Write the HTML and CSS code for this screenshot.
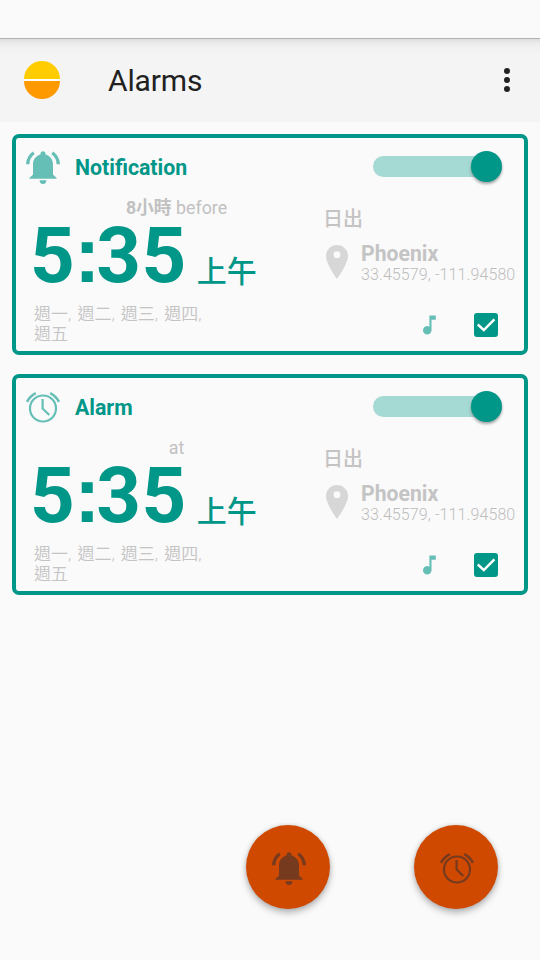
FILE: index.html
```html
<!DOCTYPE html>
<html lang="zh-Hant">
<head>
<meta charset="utf-8">
<title>Alarms</title>
<link rel="stylesheet" href="styles.css">
</head>
<body>
<svg class="symbols" aria-hidden="true">
  <symbol id="bell" viewBox="0 0 34 34">
    <path fill="currentColor" d="M17 .2a2.5 2.5 0 0 1 2.5 2.5v.8C24.2 4.800 27 8.500 27 13.200V23.500L30.600 27v.8H3.400V27L7 23.500V13.200C7 8.500 9.800 4.800 14.500 3.500V2.700A2.500 2.500 0 0 1 17 .2zM13.600 29.300h6.800a3.400 3.700 0 0 1-6.800 0z"/>
    <path fill="none" stroke="currentColor" stroke-width="3.300" d="M1.700 13.300C1.900 8.600 4 4.500 7.700 1.700M32.300 13.300C32.100 8.600 30 4.500 26.300 1.700"/>
  </symbol>
  <symbol id="clock" viewBox="0 0 34 34">
    <g fill="none" stroke="currentColor" stroke-width="2.200">
      <circle cx="17" cy="17.500" r="13"/>
      <path stroke-linejoin="round" d="M16.600 8v9.500l6.700 6.500"/>
      <path stroke-width="2.500" d="M1 10.800C3 7 5.900 4.100 9.800 2.100M33 10.800C31 7 28.100 4.100 24.200 2.100"/>
    </g>
  </symbol>
  <symbol id="pin" viewBox="0 0 22 34">
    <path fill="currentColor" fill-rule="evenodd" d="M11 0A11 11 0 0 0 0 11C0 19 11 34 11 34S22 19 22 11A11 11 0 0 0 11 0zm0 6.300a3.400 3.400 0 1 1 0 6.800a3.400 3.400 0 0 1 0-6.800z"/>
  </symbol>
  <symbol id="note" viewBox="6 3 12.200 18">
    <path fill="currentColor" d="M12 3v10.550A4 4 0 1 0 14 17V7h4V3z"/>
  </symbol>
  <symbol id="check" viewBox="0 0 24 24">
    <rect width="24" height="24" rx="3" fill="#009688"/>
    <path fill="none" stroke="#fff" stroke-width="2.500" d="M3.800 11.500l6 5.600L20.400 6.300"/>
  </symbol>
</svg>
<div class="status"></div>
<header class="bar">
  <svg class="logo" viewBox="0 0 36 38"><path fill="#fc0" d="M0 18a18 18 0 0 1 36 0z"/><path fill="#fff" d="M0 18h36v2H0z"/><path fill="#f90" d="M0 20a18 18 0 0 0 36 0z"/></svg>
  <h1>Alarms</h1>
  <svg class="more" viewBox="0 0 6 24"><circle cx="3" cy="3" r="3"/><circle cx="3" cy="12" r="3"/><circle cx="3" cy="21" r="3"/></svg>
</header>
<main>
  <section class="card">
    <div class="head">
      <svg class="type"><use href="#bell"/></svg>
      <h2>Notification</h2>
      <div class="switch"><span class="thumb"></span></div>
    </div>
    <div class="body">
      <div class="left">
        <div class="offset"><b>8小時</b> before</div>
        <div class="time">5<span class="colon">:</span>35<span class="ampm">上午</span></div>
        <div class="days">週一, 週二, 週三, 週四,<br>週五</div>
      </div>
      <div class="right">
        <div class="event">日出</div>
        <div class="place">
          <svg class="pin"><use href="#pin"/></svg>
          <div><div class="city">Phoenix</div><div class="coords">33.45579, -111.94580</div></div>
        </div>
        <div class="actions"><svg class="note"><use href="#note"/></svg><svg class="check"><use href="#check"/></svg></div>
      </div>
    </div>
  </section>
  <section class="card">
    <div class="head">
      <svg class="type"><use href="#clock"/></svg>
      <h2>Alarm</h2>
      <div class="switch"><span class="thumb"></span></div>
    </div>
    <div class="body">
      <div class="left">
        <div class="offset">at</div>
        <div class="time">5<span class="colon">:</span>35<span class="ampm">上午</span></div>
        <div class="days">週一, 週二, 週三, 週四,<br>週五</div>
      </div>
      <div class="right">
        <div class="event">日出</div>
        <div class="place">
          <svg class="pin"><use href="#pin"/></svg>
          <div><div class="city">Phoenix</div><div class="coords">33.45579, -111.94580</div></div>
        </div>
        <div class="actions"><svg class="note"><use href="#note"/></svg><svg class="check"><use href="#check"/></svg></div>
      </div>
    </div>
  </section>
</main>
<footer class="fabs">
  <div class="fab"><svg><use href="#bell"/></svg></div>
  <div class="fab"><svg><use href="#clock"/></svg></div>
</footer>
</body>
</html>
```
FILE: styles.css
```css
* { box-sizing: border-box; }
body {
  margin: 0;
  width: 540px;
  height: 960px;
  display: flex;
  flex-direction: column;
  overflow: hidden;
  background: #fafafa;
  font-family: Roboto, "Noto Sans CJK TC", sans-serif;
  white-space: nowrap;
}
svg { display: block; flex: none; }
.symbols { position: absolute; width: 0; height: 0; }
h1, h2 { margin: 0; }
.status { height: 38px; flex: none; }
.bar {
  height: 84px;
  flex: none;
  display: flex;
  align-items: center;
  padding: 0 30px 2px 24px;
  border-top: 1px solid #b2b2b2;
  background: linear-gradient(#dedede 0, #ebebeb 4px, #f1f1f1 9px, #f4f4f4 15px);
}
.logo { width: 36px; height: 38px; }
h1 { flex: 1; margin: 2px 0 0 48px; font-size: 30px; letter-spacing: -.15px; font-weight: 400; color: #212121; }
.more { width: 6px; height: 24px; fill: #212121; }
main { flex: 1; padding: 12px 12px 0; }
.card {
  height: 221px;
  margin-bottom: 19px;
  border: 4px solid #009688;
  border-radius: 7px;
  color: #c4c4c4;
}
.head { height: 58px; display: flex; align-items: center; padding: 0 26px 0 10px; }
.type { width: 34px; height: 34px; margin-top: 1px; color: #66bfb7; }
h2 { flex: 1; margin: 1px 0 0 15px; font-size: 21.3px; line-height: 25px; font-weight: 700; color: #009688; }
.switch {
  width: 125px;
  height: 21px;
  margin-top: -1px;
  display: flex;
  align-items: center;
  justify-content: flex-end;
  border-radius: 11px;
  background: #a5d9d3;
}
.thumb { width: 31px; height: 31px; margin-right: -4px; border-radius: 50%; background: #009688; box-shadow: 0 2px 3px rgba(0,0,0,.35); }
.body { display: flex; height: 155px; }
.left { width: 287px; margin-left: 17px; }
.offset { height: 22px; line-height: 23px; font-size: 17.8px; text-align: center; color: #c1c1c1; }
.time { height: 74px; line-height: 76px; margin-left: -3px; font-size: 78px; letter-spacing: .5px; font-weight: 700; color: #009688; }
.colon { display: inline-block; width: 22px; margin-left: -1px; line-height: 40px; font-family: "Liberation Sans", sans-serif; }
.ampm { margin-left: 10px; font-size: 30px; line-height: 40px; letter-spacing: 0; font-weight: 500; }
.days { margin: 12px 0 0 1px; line-height: 20px; font-size: 17px; word-spacing: 2px; font-weight: 350; }
.right { flex: 1; padding: 10px 0 0 3px; }
.event { height: 26px; line-height: 26px; font-size: 20px; font-weight: 500; }
.place { display: flex; align-items: center; height: 44px; margin: 8px 0 0 3px; gap: 13px; }
.pin { width: 22px; height: 34px; color: #d7d7d7; }
.city { height: 23px; line-height: 22px; padding-top: 2px; font-size: 21.2px; font-weight: 700; }
.coords { height: 19px; line-height: 21px; font-size: 16px; letter-spacing: .1px; font-weight: 300; color: #bdbdbd; }
.actions { display: flex; align-items: center; justify-content: flex-end; gap: 38px; height: 24px; margin: 29px 26px 0 0; }
.note { width: 13px; height: 20px; color: #66bfb7; }
.check { width: 24px; height: 24px; }
.fabs { flex: none; height: 135px; display: flex; justify-content: flex-end; gap: 84px; padding-right: 42px; }
.fab {
  width: 84px;
  height: 84px;
  display: flex;
  align-items: center;
  justify-content: center;
  padding: 3px 0 0 2px;
  border-radius: 50%;
  background: #cf4900;
  color: #763a1f;
  box-shadow: 0 4px 7px rgba(0,0,0,.26), 0 0 4px rgba(0,0,0,.14);
}
.fab svg { width: 34px; height: 34px; }
```
